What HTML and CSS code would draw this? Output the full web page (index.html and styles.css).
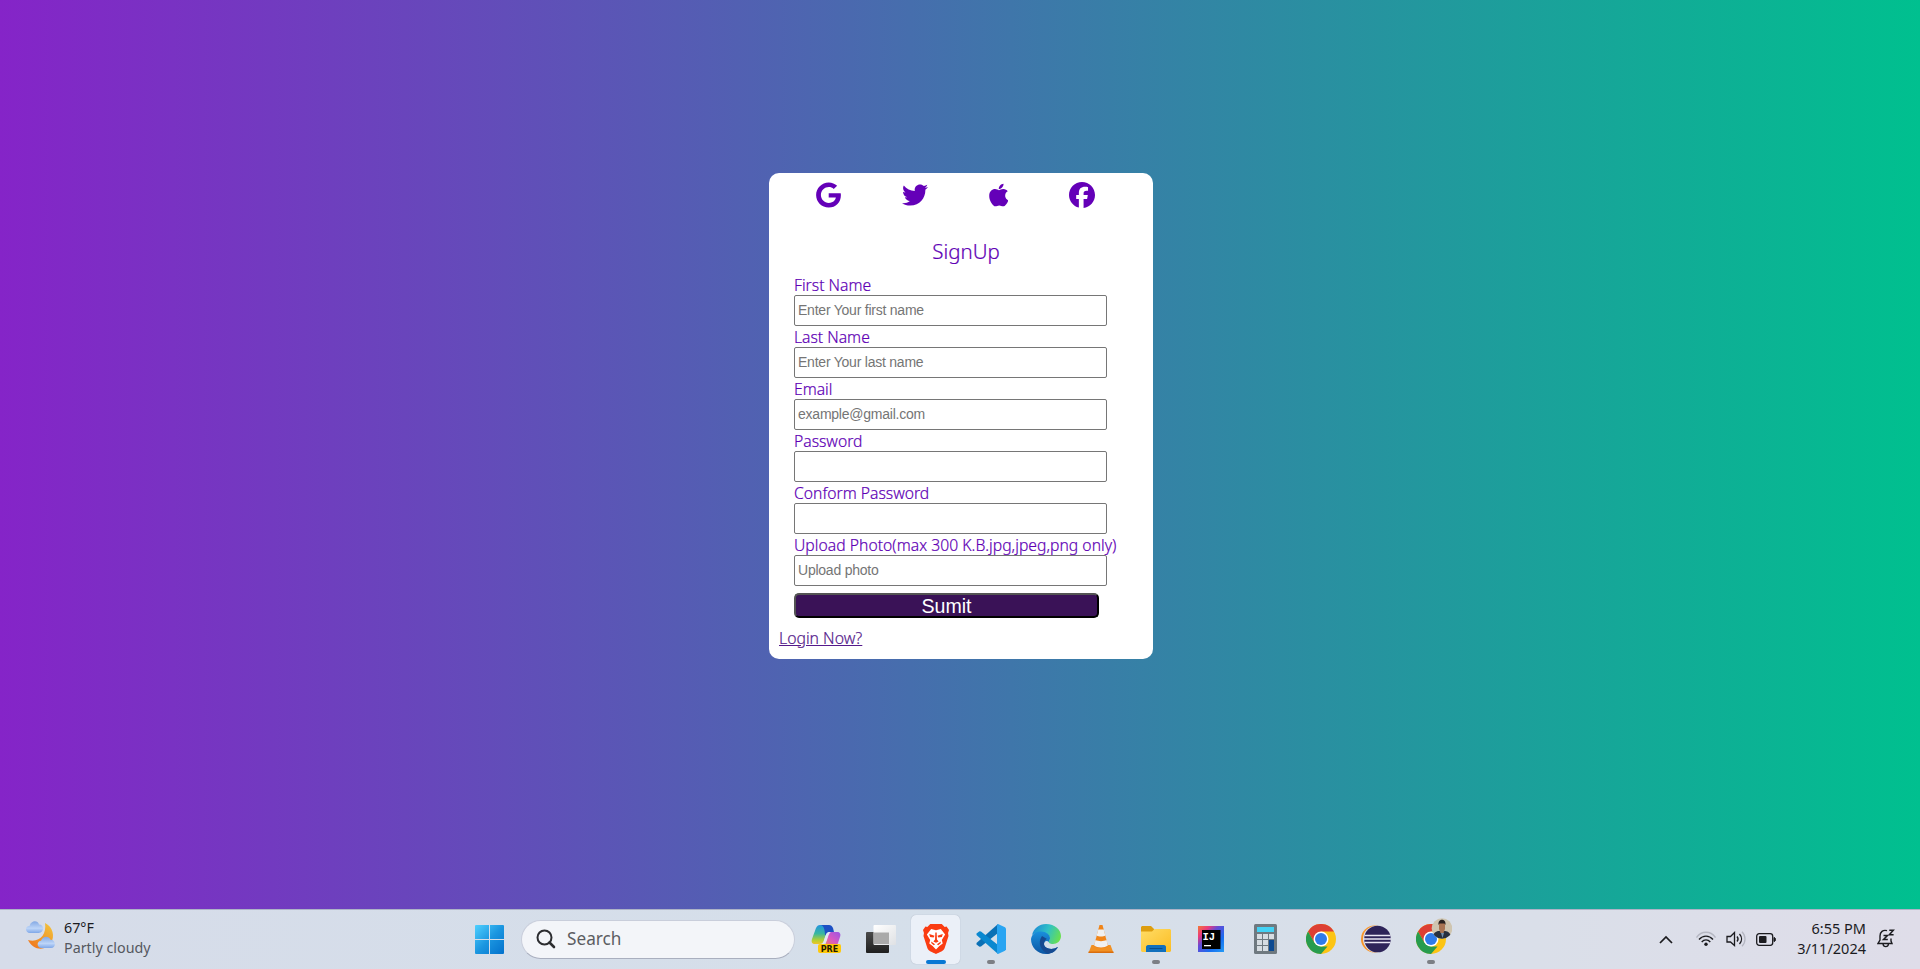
FILE: index.html
```html
<!DOCTYPE html>
<html lang="en">
<head>
<meta charset="utf-8">
<title>SignUp</title>
<link rel="stylesheet" href="styles.css">
</head>
<body>
<main class="page">
  <section class="card">
    <div class="socials">
      <svg width="25" height="26" viewBox="0 0 488 512"><path d="M488 261.8C488 403.3 391.1 504 248 504 110.8 504 0 393.2 0 256S110.8 8 248 8c66.800 0 123 24.500 166.300 64.900l-67.500 64.900C258.500 52.600 94.300 116.600 94.300 256c0 86.500 69.100 156.600 153.700 156.600 98.200 0 135-70.400 140.800-106.900H248v-85.300h236.100c2.300 12.700 3.900 24.900 3.900 41.400z"/></svg>
      <svg width="26" height="26" viewBox="0 0 512 512"><path d="M459.37 151.716c.325 4.548.325 9.097.325 13.645 0 138.72-105.583 298.558-298.558 298.558-59.452 0-114.68-17.219-161.137-47.106 8.447.974 16.568 1.299 25.34 1.299 49.055 0 94.213-16.568 130.274-44.832-46.132-.975-84.792-31.188-98.112-72.772 6.498.974 12.995 1.624 19.818 1.624 9.421 0 18.843-1.3 27.614-3.573-48.081-9.747-84.143-51.98-84.143-102.985v-1.299c13.969 7.797 30.214 12.67 47.431 13.319-28.264-18.843-46.781-51.005-46.781-87.391 0-19.492 5.197-37.36 14.294-52.954 51.655 63.675 129.3 105.258 216.365 109.807-1.624-7.797-2.599-15.918-2.599-24.04 0-57.828 46.782-104.934 104.934-104.934 30.213 0 57.502 12.67 76.67 33.137 23.715-4.548 46.456-13.32 66.599-25.34-7.798 24.366-24.366 44.833-46.132 57.827 21.117-2.273 41.584-8.122 60.426-16.243-14.292 20.791-32.161 39.308-52.628 54.253z"/></svg>
      <svg width="19.5" height="26" viewBox="0 0 384 512"><path d="M318.7 268.7c-.2-36.7 16.4-64.4 50-84.8-18.8-26.9-47.2-41.7-84.7-44.6-35.5-2.8-74.3 20.7-88.5 20.7-15 0-49.4-19.7-76.4-19.7C63.3 141.2 4 184.8 4 273.5q0 39.3 14.4 81.2c12.8 36.7 59 126.7 107.2 125.2 25.2-.6 43-17.9 75.8-17.9 31.8 0 48.3 17.9 76.4 17.9 48.6-.7 90.4-82.5 102.6-119.3-65.2-30.7-61.7-90-61.7-91.9zm-56.6-164.2c27.3-32.4 24.8-61.9 24-72.5-24.1 1.4-52 16.4-67.9 34.9-17.5 19.8-27.8 44.3-25.6 71.9 26.1 2 49.9-11.4 69.5-34.3z"/></svg>
      <svg width="26" height="26" viewBox="0 0 512 512"><path d="M512 256C512 114.6 397.4 0 256 0S0 114.6 0 256C0 376 82.7 476.8 194.2 504.5V334.2H141.4V256h52.8V222.3c0-87.1 39.4-127.5 125-127.5c16.2 0 44.2 3.2 55.7 6.4V172c-6-.6-16.5-1-29.6-1c-42 0-58.2 15.9-58.2 57.2V256h83.6l-14.4 78.2H287V510.1C413.8 494.8 512 386.9 512 256z"/></svg>
    </div>
    <h1 class="title">SignUp</h1>
    <form class="form">
      <label class="field"><span>First Name</span><input type="text" placeholder="Enter Your first name"></label>
      <label class="field"><span>Last Name</span><input type="text" placeholder="Enter Your last name"></label>
      <label class="field"><span>Email</span><input type="text" placeholder="example@gmail.com"></label>
      <label class="field"><span>Password</span><input type="password"></label>
      <label class="field"><span>Conform Password</span><input type="password"></label>
      <label class="field"><span class="upload">Upload Photo(max 300 K.B.jpg,jpeg,png only)</span><input type="text" placeholder="Upload photo"></label>
      <button class="submit" type="button">Sumit</button>
    </form>
    <a class="login" href="#">Login Now?</a>
  </section>
</main>
<footer class="taskbar">
  <div class="weather">
    <svg width="32" height="30" viewBox="0 0 32 30">
      <defs>
        <linearGradient id="moon" x1="0" y1="1" x2=".7" y2="0"><stop offset="0" stop-color="#f0701c"/><stop offset="1" stop-color="#f2bd38"/></linearGradient>
        <linearGradient id="cloud" x1="0" y1="0" x2="0" y2="1"><stop offset="0" stop-color="#84a9e4"/><stop offset=".6" stop-color="#bdd5f8"/><stop offset="1" stop-color="#7fa7e8"/></linearGradient>
      </defs>
      <path fill="url(#moon)" d="M20 2c8 4 10 13 6 20-5 8-18 8-23-3 11 3 19-5 17-17z"/>
      <path fill="url(#cloud)" d="M5 12C0 12-.5 5 4.500 5 6-1 13-1 14 3.500c5.500 0 5.500 8.500-.5 8.500z"/>
      <path fill="url(#cloud)" d="M16.500 27c-5 0-5-7-.5-7.200 2-5.400 8-5 9.500-1.100 5.500 0 6 8.300.5 8.300z"/>
    </svg>
    <div class="weather-text"><span class="temp">67°F</span><span class="sky">Partly cloudy</span></div>
  </div>
  <div class="center">
    <svg class="start" width="29" height="29" viewBox="0 0 29 29">
      <defs><linearGradient id="win" x1="0" y1="0" x2="1" y2="1"><stop offset="0" stop-color="#4fd0ff"/><stop offset=".5" stop-color="#1b96e0"/><stop offset="1" stop-color="#0371cc"/></linearGradient></defs>
      <path fill="url(#win)" d="M1 0h13v14H0V1a1 1 0 0 1 1-1zM15 0h13a1 1 0 0 1 1 1v13H15zM0 15h14v14H1a1 1 0 0 1-1-1zM15 15h14v13a1 1 0 0 1-1 1H15z"/>
    </svg>
    <div class="search">
      <svg width="20" height="20" viewBox="0 0 20 20" fill="none" stroke="#2c2d30" stroke-linecap="round"><circle cx="8.500" cy="8.500" r="7" stroke-width="2"/><path d="M13.500 13.500l4.500 4.500" stroke-width="2.600"/></svg>
      <span>Search</span>
    </div>
    <div class="apps">
      <div class="app">
        <svg width="30" height="30" viewBox="0 0 30 30">
          <defs>
            <linearGradient id="cpa" x1="0" y1="0" x2="0" y2="1"><stop offset="0" stop-color="#2393e0"/><stop offset=".45" stop-color="#38b7a0"/><stop offset=".8" stop-color="#b5cf31"/><stop offset="1" stop-color="#f0c52a"/></linearGradient>
            <linearGradient id="cpb" x1="1" y1="0" x2="0" y2="1"><stop offset="0" stop-color="#9b56e4"/><stop offset=".5" stop-color="#d659c2"/><stop offset="1" stop-color="#fa8a5c"/></linearGradient>
          </defs>
          <path fill="url(#cpa)" d="M9 1h9l-5 15c-1 3-2 4-5 4H4c-3 0-4-2-3-5L5 4c1-2 2-3 4-3z"/>
          <path fill="#1c50c4" d="M10 1h8c2 0 3 1 4 3l1 4h-4c-3 0-4 2-5 4 0-6-1-10-4-11z"/>
          <path fill="url(#cpb)" d="M19 8h7c3 0 4 2 3 5l-3 9H12c3 0 3-4 4-7l1-4c1-2 1-3 2-3z"/>
          <path fill="#e4e9f4" d="M18 8h2c-2 1-3 5-4 8-1 2-2 4-5 4 3-2 3-12 7-12z"/>
          <rect x="7" y="20" width="23" height="9" rx="2" fill="#ffc90a"/>
          <text class="pre" x="18.500" y="27.500" text-anchor="middle">PRE</text>
        </svg>
      </div>
      <div class="app">
        <svg width="30" height="30" viewBox="0 0 30 30">
          <defs>
            <linearGradient id="tv" x1="0" y1="0" x2="0" y2="1"><stop offset="0" stop-color="#4a4a4a"/><stop offset="1" stop-color="#1f1f1f"/></linearGradient>
            <linearGradient id="tw" x1="0" y1="0" x2="1" y2="1"><stop offset="0" stop-color="#fff"/><stop offset="1" stop-color="#dfe1e4"/></linearGradient>
          </defs>
          <rect y="8" width="23" height="21" rx="1" fill="url(#tv)"/><rect x="7.500" y="1" width="22.500" height="20" rx="1" fill="url(#tw)"/><path d="M8 8.500h15V20H8z" fill="#aaa"/>
        </svg>
      </div>
      <div class="app active run">
        <svg width="26" height="30" viewBox="1.500 0 27 30" preserveAspectRatio="none">
          <path fill="#fa3c12" d="M9 0h12l3 3 2-.5L28.500 6l-1 3 .5 3-4 12c-1 3-5 4-9 6-4-2-8-3-9-6L2 12l.5-3-1-3L4 2.500 6 3z"/>
          <path fill="#fff" d="M15 6.300l5-1.300 4.500 5.500L21 16l1 3.500-3.500 2.500L15 25.500 11.500 22 8 19.500 9 16l-3.500-5.500L10 5z"/>
          <path fill="#fa3c12" d="M8 10l5.500 1.700-1 1.800-3.700-.5zM22 10l-5.500 1.700 1 1.800 3.700-.5zM14.300 8.500h1.400l.3 7 1.700 2L15 18.700l-2.700-1.200 1.700-2zM10 17.500l4 2.700-1.300 1-2.500-2zM20 17.500l-4 2.700 1.300 1 2.500-2z"/>
        </svg>
      </div>
      <div class="app run">
        <svg width="30" height="30" viewBox="0 0 30 30">
          <path fill="#0a70b5" d="M22 0v9L5 22.500l-1.500.3L.5 20.500V19z"/>
          <path fill="#0a88d0" d="M22 30v-9L5 7.500l-1.500-.3L.500 9.500V11z"/>
          <path fill="#29a5f2" d="M22 0l7 3.200 1 1.300v21l-1 1.300L22 30l-1-1.500v-27z"/>
        </svg>
      </div>
      <div class="app">
        <svg width="30" height="30" viewBox="0 0 30 30">
          <defs>
            <linearGradient id="eda" x1="0" y1=".3" x2="1" y2=".6"><stop offset="0" stop-color="#1c8ad6"/><stop offset=".5" stop-color="#2fc1c6"/><stop offset="1" stop-color="#6ae04e"/></linearGradient>
            <linearGradient id="edb" x1="0" y1="0" x2="0" y2="1"><stop offset="0" stop-color="#1a8fdc"/><stop offset="1" stop-color="#0c56a4"/></linearGradient>
          </defs>
          <path fill="url(#eda)" d="M1 11C3 4 8 0 15 0c9 0 15 6 15 12 0 5-4 8-8 8-3 0-5-1-4-3 2-3 0-7-4-8C8 7 4 9 1 11z"/>
          <path fill="url(#edb)" d="M0 15C1 9 6 7.500 10 7.500c5 0 9 3 9 6.500 0 2-1 2-1 4-2-2-5-1-5 2 0 4 7 7 14 3-3 5-7 7-12 7C6 30 0 23 0 15z"/>
          <path fill="#164a91" d="M11 12c-5 7-1 15 6 17.800 4-.5 8-3 10-6.800-7 4-14 1-14-3 0-3 2-5 3-5z"/>
        </svg>
      </div>
      <div class="app">
        <svg width="26" height="30" viewBox="0 0 26 30">
          <path fill="#f19022" d="M3.500 21h19l3 8H.5z"/><path fill="#d96d0d" d="M.5 27.500h25V29H.5z"/>
          <path fill="#f08418" d="M11.500 1h3L20 22c-2 3-12 3-14 0z"/>
          <path fill="#f0f0f0" d="M10.300 5.500h5.400l1.600 6c-2 1.300-6.600 1.300-8.600 0zM7.500 16c3 1.500 8 1.500 11 0l1.400 5.500c-3 2.500-10.800 2.500-13.800 0z"/>
        </svg>
      </div>
      <div class="app run">
        <svg width="30" height="30" viewBox="0 0 30 30">
          <defs><linearGradient id="fo" x1="0" y1="0" x2="1" y2="1"><stop offset="0" stop-color="#ffdc66"/><stop offset="1" stop-color="#fbbd23"/></linearGradient></defs>
          <path fill="#dd9d0e" d="M1 2h9l3 3v3H0V3z"/><path fill="url(#fo)" d="M0 7.500h11L13.500 5H29l1 1v21l-1 1H1l-1-1z"/>
          <path fill="#1170bd" d="M5 28v-5c0-1 .8-2 2-2h16c1.200 0 2 1 2 2v5z"/><path d="M8.500 24.500h13" stroke="#0a4d8c"/>
        </svg>
      </div>
      <div class="app">
        <svg width="26" height="26" viewBox="0 0 26 26">
          <defs><linearGradient id="ij" x1="0" y1="0" x2="1" y2="1"><stop offset="0" stop-color="#f37835"/><stop offset=".22" stop-color="#ec3a79"/><stop offset=".4" stop-color="#674ad5"/><stop offset=".7" stop-color="#176df0"/><stop offset="1" stop-color="#249cf5"/></linearGradient></defs>
          <path fill="url(#ij)" d="M0 0h26v26H0z"/><path d="M4 4h18.500v19H4z"/><text class="ij" x="4.500" y="13.500">IJ</text><path fill="#fff" d="M6 19h7v1.300H6z"/>
        </svg>
      </div>
      <div class="app">
        <svg width="23" height="30" viewBox="0 0 23 30">
          <rect width="23" height="30" rx="1.500" fill="#6f7980"/><path fill="#43d2f5" d="M3 3h17v5H3z"/>
          <path fill="#d7dde2" d="M3 10h5v5H3zM9 10h5v5H9zM15 10h5v5h-5zM3 16h5v5H3zM9 16h5v5H9zM3 22h5v5H3zM9 22h5v5H9z"/><path fill="#0d4a91" d="M15 16h5v11h-5z"/>
        </svg>
      </div>
      <div class="app">
        <svg width="30" height="30" viewBox="0 0 30 30">
          <g id="chrome"><circle cx="15" cy="15" r="15" fill="#fcc414"/>
          <path fill="#dd3f34" d="M2 7.500A15 15 0 0 1 28 7.500H15L8.500 18.800z"/><path fill="#279c4e" d="M2 7.500l6.500 11.300 6.500 3.700h6.500L15 30A15 15 0 0 1 2 7.500z"/>
          <circle cx="15" cy="15" r="7.500" fill="#fff"/><circle cx="15" cy="15" r="6" fill="#2f7bea"/></g>
        </svg>
      </div>
      <div class="app">
        <svg width="30" height="28" viewBox="0 0 30 28">
          <circle cx="13.500" cy="14" r="13.500" fill="#f9962a"/><circle cx="15.300" cy="14" r="13.300" fill="#dfe1ee"/><circle cx="16.500" cy="14" r="13.300" fill="#2e2459"/>
          <path d="M3.500 10.500h26M3 14h27M3.500 17.500h26" stroke="#e9e6f4" stroke-width="1.700"/>
        </svg>
      </div>
      <div class="app run">
        <svg class="profile" width="36" height="36" viewBox="0 0 36 36">
          <defs><clipPath id="av"><circle cx="26" cy="10.500" r="10.300"/></clipPath></defs>
          <use href="#chrome" y="6"/>
          <g clip-path="url(#av)"><path fill="#cfc5b0" d="M15 0h22v22H15z"/><path fill="#27303f" d="M16 21c1-6 4-8 7-8h6c4 0 6 4 8 8v3H15z"/><path fill="#a97453" d="M23 5h6v6l-1.500 4h-3L23 11z"/><path fill="#2a2322" d="M22.500 7c-1-7 8-7 7 0l-1-1.500h-5z"/><path fill="#6f8faf" d="M25 15l1.500 5 1.500-5z"/></g>
        </svg>
      </div>
    </div>
  </div>
  <div class="tray">
    <svg class="chev" width="14" height="9" viewBox="0 0 14 9" fill="none" stroke="#1b1b1f" stroke-width="1.700"><path d="M1 8l6-6 6 6"/></svg>
    <svg class="wifi" width="20" height="16" viewBox="0 0 20 16" fill="none" stroke="#1b1b1f" stroke-width="1.400"><path stroke="#b5b7c2" d="M.5 6.500c5-7 14-7 19 0"/><path d="M3 8.500c4-4.500 10-4.500 14 0M5.700 11c2.500-2.800 6.100-2.800 8.600 0"/><circle cx="10" cy="13.300" r="1.700" fill="#1b1b1f" stroke="none"/></svg>
    <svg class="vol" width="20" height="16" viewBox="0 0 20 16" fill="none" stroke="#1b1b1f" stroke-width="1.300"><path d="M1 5.500h3.500L8.500 1.500v13L4.500 11H1z"/><path d="M11 5.500c1.300 1.500 1.300 3.500 0 5M13.500 3c2.700 3 2.700 7 0 10"/><path stroke="#b5b7c2" d="M16 .8c4 4 4 10.400 0 14.400"/></svg>
    <svg class="bat" width="20" height="13" viewBox="0 0 20 13"><rect x=".7" y=".7" width="16" height="11.600" rx="2.500" fill="none" stroke="#1b1b1f" stroke-width="1.300"/><rect x="3" y="3" width="7.500" height="7" rx="1" fill="#1b1b1f"/><path d="M18 4.500c2 0 2 4 0 4z" fill="#1b1b1f" stroke="#1b1b1f"/></svg>
    <div class="clock"><span>6:55 PM</span><span>3/11/2024</span></div>
    <svg class="bell" width="18" height="19" viewBox="0 0 18 19" fill="none" stroke="#1b1b1f" stroke-width="1.400"><path d="M10 1.700C6 .5 3 3 3 7v4l-2 3.500h14L14 12V9.500M6 15c.5 3.500 5 3.500 5.500 0"/><path stroke-width="1.500" d="M6.500 6.500h4l-4 4h4.300M12.300 1.200h4l-4 4.500h4.300"/></svg>
  </div>
</footer>
</body>
</html>
```
FILE: styles.css
```css
* { box-sizing: border-box; }
html { height: 969px; overflow: hidden; }
body {
  margin: 0;
  height: 969px;
  display: flex;
  flex-direction: column;
  overflow: hidden;
  font-family: "Noto Sans", "Open Sans", sans-serif;
}
svg { display: block; flex: none; }
.page {
  height: 909px;
  flex: none;
  padding-top: 173px;
  background: linear-gradient(to right, #8524c8, #00c08f);
}
.card {
  width: 384px;
  height: 486px;
  margin-left: 769px;
  background: #fff;
  border-radius: 10px;
  color: #6000b5;
}
.socials {
  display: flex;
  gap: 60.800px;
  padding: 9px 0 0 47.300px;
  fill: #6400b8;
}
.title {
  margin: 28px 0 0 10px;
  font-size: 20.500px;
  line-height: 30px;
  font-weight: 300;
  -webkit-text-stroke: .2px;
  text-align: center;
}
.form {
  display: flex;
  flex-direction: column;
  align-items: flex-start;
  padding: 9.500px 0 0 25px;
}
.field { display: flex; flex-direction: column; height: 52.200px; }
.field span {
  height: 19px;
  font-size: 15.700px;
  line-height: 18px;
  font-weight: 300;
  -webkit-text-stroke: .2px;
  white-space: nowrap;
}
.field .upload { letter-spacing: .03px; }
.field input {
  width: 313px;
  height: 31px;
  padding: 0 3px 1px;
  border: 1px solid #767676;
  border-radius: 2px;
  font: 14px "Liberation Sans", Arial, sans-serif;
  letter-spacing: -.23px;
}
.field input::placeholder { color: #757575; }
.submit {
  width: 305px;
  height: 25px;
  margin-top: 4px;
  padding: 1px 0 0;
  border: 2px outset #000;
  border-radius: 5px;
  background: #3a1257;
  color: #fff;
  font: 19.600px/20px "Liberation Sans", Arial, sans-serif;
}
.login {
  display: block;
  margin: 8.500px 0 0 10px;
  width: max-content;
  font-size: 15.800px;
  font-weight: 300;
  -webkit-text-stroke: .2px;
  line-height: 24px;
  color: #551a8b;
}
.taskbar {
  flex: none;
  height: 60px;
  display: flex;
  align-items: center;
  border-top: 1px solid #adb3c7;
  padding-bottom: 1px;
  background: linear-gradient(to right, #d6dce9, #d5dfea 50%, #dadfe9 80%, #dfdde9);
}
.weather { display: flex; width: 475px; padding-left: 25px; gap: 7px; }
.weather-text { display: flex; flex-direction: column; font-size: 14.300px; line-height: 20px; margin-top: -3px; }
.temp { color: #1b1b1f; }
.sky { color: #55585f; }
.center { display: flex; align-items: center; }
.search {
  display: flex;
  align-items: center;
  gap: 11px;
  width: 274px;
  height: 39px;
  margin: 0 3px 0 17px;
  padding-left: 14px;
  border: 1px solid #c9cedb;
  border-bottom-color: #a9afbf;
  border-radius: 20px;
  background: #f3f5f9;
  color: #5c5d62;
  font-size: 17.200px;
}
.search span { margin-top: -2px; }
.apps { display: flex; }
.app {
  position: relative;
  display: flex;
  align-items: center;
  justify-content: center;
  width: 55px;
  height: 49px;
}
.app.active { width: 49px; margin: 0 3px; border-radius: 5px; background: #ebf0f8; box-shadow: 0 0 1px #9aa3b5; }
.app.run::after {
  content: "";
  position: absolute;
  left: calc(50% - 4px);
  bottom: 0;
  width: 8px;
  height: 4px;
  border-radius: 2px;
  background: #7c7f85;
}
.app.active.run::after { left: calc(50% - 10px); width: 20px; background: #0878d4; }
.profile { margin: -6px 0 0 6px; }
.pre { font: bold 8px "DejaVu Sans", sans-serif; fill: #241c00; }
.ij { font: bold 10.500px "Liberation Mono", monospace; fill: #fff; }
.tray { display: flex; align-items: center; margin-left: auto; padding-right: 25px; }
.wifi { margin-left: 23px; }
.vol { margin-left: 10px; }
.bat { margin-left: 10px; }
.clock { width: 90px; display: flex; flex-direction: column; align-items: flex-end; font-size: 14.500px; line-height: 20px; color: #1b1b1f; margin: -2px 11px 0 0; }
.bell { margin-top: -2px; }
```
